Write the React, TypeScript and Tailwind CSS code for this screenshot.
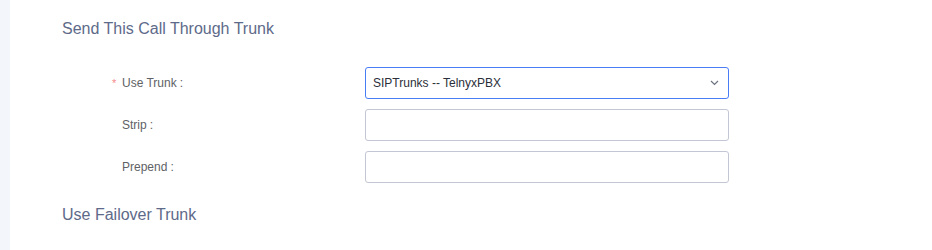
import React from "react";

function Row({ label, required, children }: { label: string; required?: boolean; children: React.ReactNode }) {
  return (
    <div className="flex items-center h-[32px]">
      <div className="w-[303px] pl-[50px] flex items-center text-[12px] text-[#606266]">
        <span className={required ? "text-[#f78989] w-[10px] text-[11px]" : "w-[10px]"}>{required ? "*" : ""}</span>
        <span>{label}</span>
        <span className="ml-[3px]">:</span>
      </div>
      {children}
    </div>
  );
}

export default function App() {
  return (
    <div className="flex w-full h-[250px] bg-white" style={{ fontFamily: '"Liberation Sans", Arial, sans-serif' }}>
      <div className="w-[10px] shrink-0 bg-[#f3f6fa]" />
      <div className="flex-1 pl-[52px] pt-[17px]">
        <div className="text-[16px] leading-[24px] text-[#5e6a89]">Send This Call Through Trunk</div>
        <div className="mt-[26px] flex flex-col gap-[10px]">
          <Row label="Use Trunk" required>
            <div className="w-[364px] h-[32px] border border-[#4a7cf6] rounded-[3px] flex items-center justify-between pl-[7px] pr-[9px] text-[12px] text-[#2b2f3a]">
              <span>SIPTrunks -- TelnyxPBX</span>
              <svg width="9" height="6" viewBox="0 0 9 6" fill="none">
                <path d="M1 1l3.5 3.5L8 1" stroke="#6b7280" strokeWidth="1.2" />
              </svg>
            </div>
          </Row>
          <Row label="Strip">
            <div className="w-[364px] h-[32px] border border-[#c3c7d4] rounded-[3px]" />
          </Row>
          <Row label="Prepend">
            <div className="w-[364px] h-[32px] border border-[#c3c7d4] rounded-[3px]" />
          </Row>
        </div>
        <div className="mt-[20px] text-[16px] leading-[24px] text-[#5e6a89]">Use Failover Trunk</div>
      </div>
    </div>
  );
}
